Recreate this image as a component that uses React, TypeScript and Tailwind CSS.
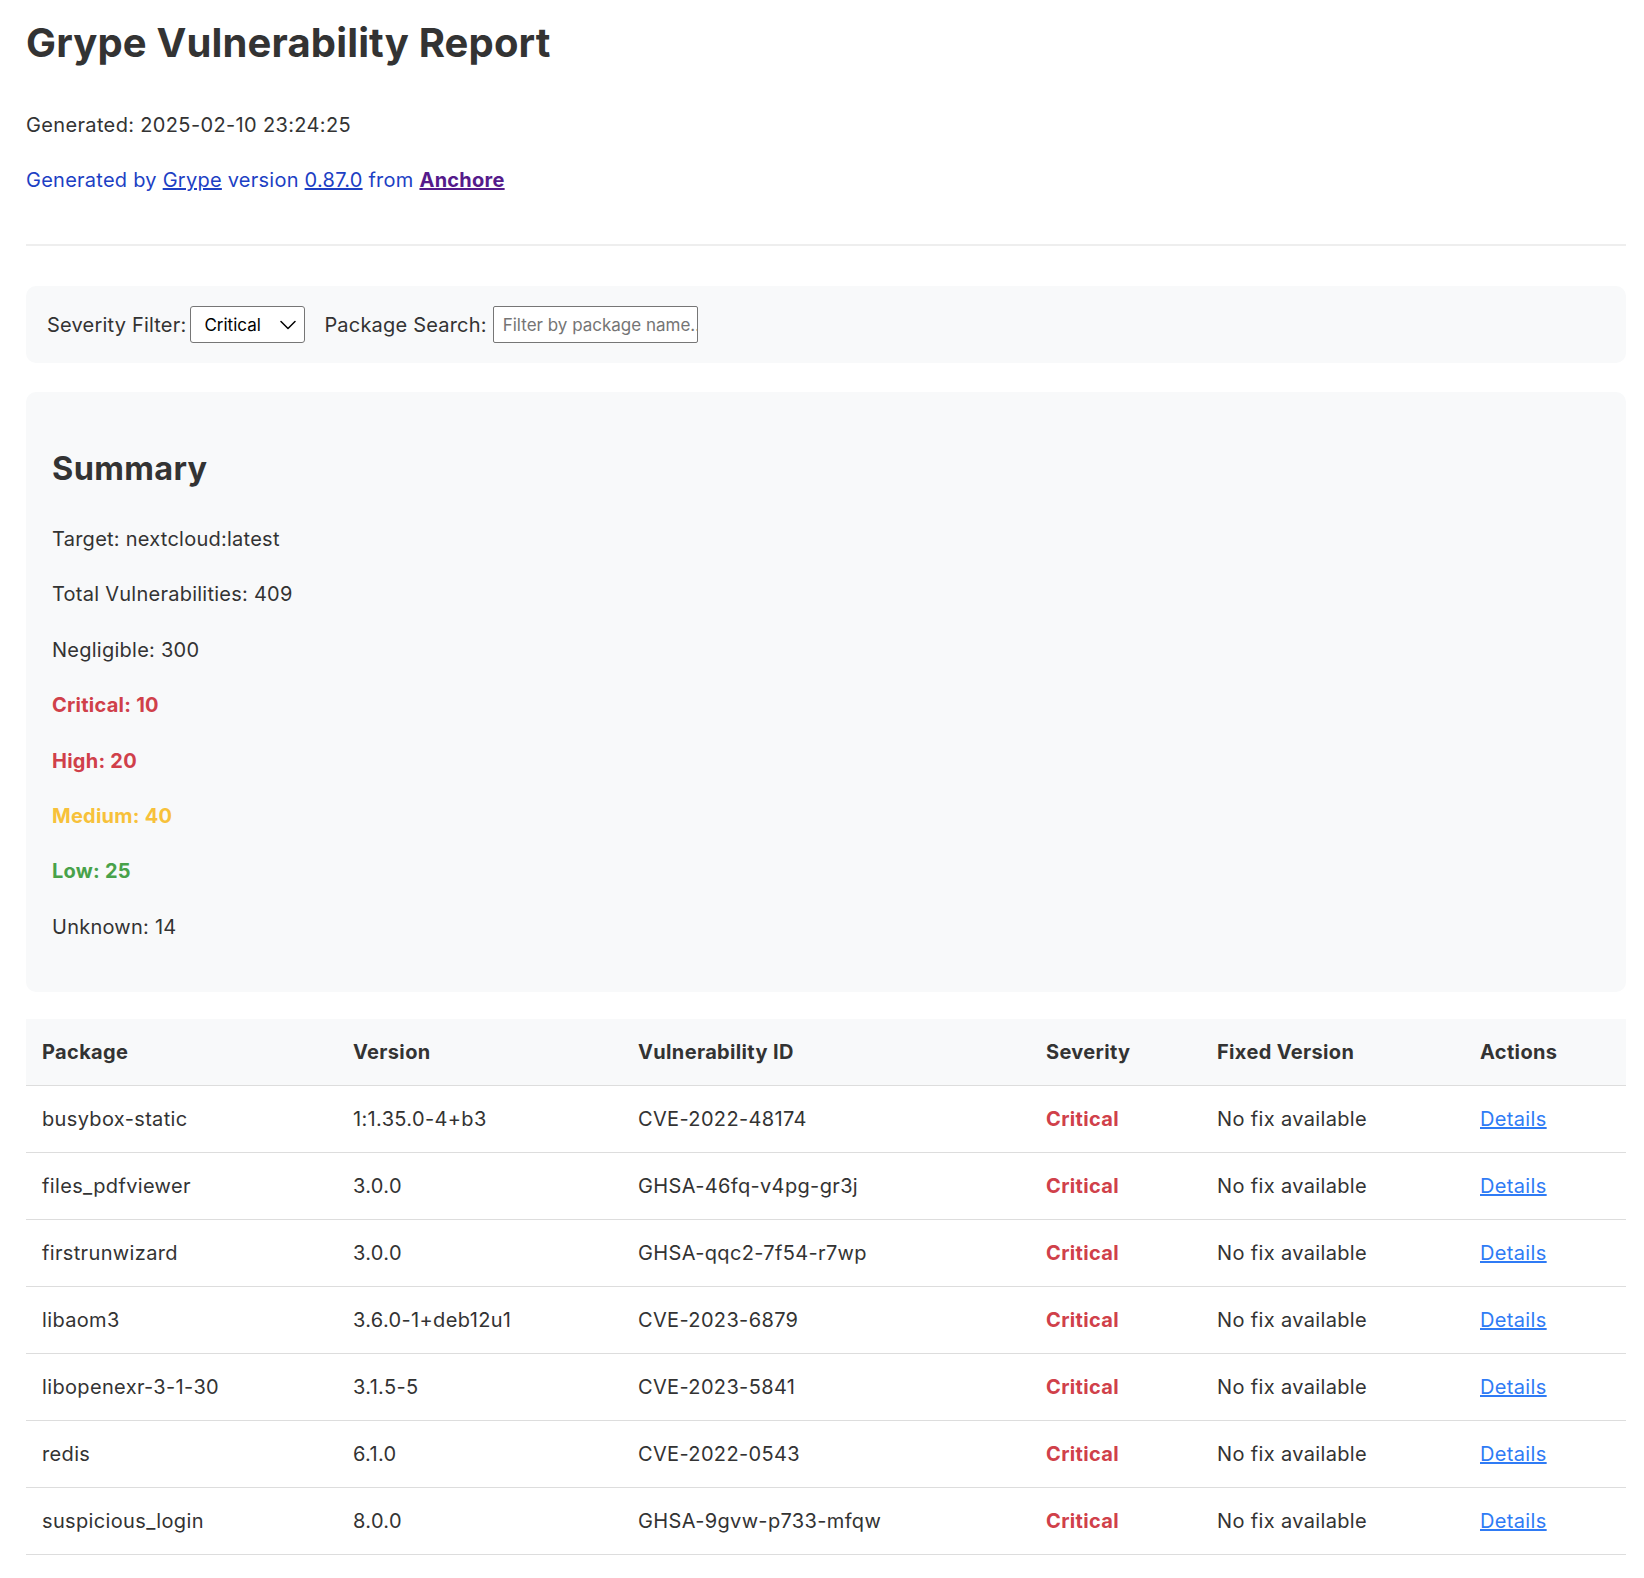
type Vuln = {
  pkg: string;
  version: string;
  id: string;
  severity: string;
  fixed: string;
};

const VULNS: Vuln[] = [
  { pkg: 'busybox-static', version: '1:1.35.0-4+b3', id: 'CVE-2022-48174', severity: 'Critical', fixed: 'No fix available' },
  { pkg: 'files_pdfviewer', version: '3.0.0', id: 'GHSA-46fq-v4pg-gr3j', severity: 'Critical', fixed: 'No fix available' },
  { pkg: 'firstrunwizard', version: '3.0.0', id: 'GHSA-qqc2-7f54-r7wp', severity: 'Critical', fixed: 'No fix available' },
  { pkg: 'libaom3', version: '3.6.0-1+deb12u1', id: 'CVE-2023-6879', severity: 'Critical', fixed: 'No fix available' },
  { pkg: 'libopenexr-3-1-30', version: '3.1.5-5', id: 'CVE-2023-5841', severity: 'Critical', fixed: 'No fix available' },
  { pkg: 'redis', version: '6.1.0', id: 'CVE-2022-0543', severity: 'Critical', fixed: 'No fix available' },
  { pkg: 'suspicious_login', version: '8.0.0', id: 'GHSA-9gvw-p733-mfqw', severity: 'Critical', fixed: 'No fix available' },
];

const SUMMARY = [
  { label: 'Target: nextcloud:latest', cls: 'text-[#333]' },
  { label: 'Total Vulnerabilities: 409', cls: 'text-[#333]' },
  { label: 'Negligible: 300', cls: 'text-[#333]' },
  { label: 'Critical: 10', cls: 'text-[#d0404a] font-bold' },
  { label: 'High: 20', cls: 'text-[#d0404a] font-bold' },
  { label: 'Medium: 40', cls: 'text-[#f7c13a] font-bold' },
  { label: 'Low: 25', cls: 'text-[#48a24a] font-bold' },
  { label: 'Unknown: 14', cls: 'text-[#333]' },
];

export default function App() {
  return (
    <div className="min-h-screen bg-white text-[#333] font-['Inter','Liberation_Sans',sans-serif] text-[20px] leading-[30px] tracking-[0.35px]">
      <div className="ml-[26px] w-[1600px] pb-[23px]">
        <h1 className="pt-[19px] text-[40px] leading-[48px] font-bold tracking-[0.15px]">Grype Vulnerability Report</h1>
        <p className="mt-[43px]">Generated: 2025-02-10 23:24:25</p>
        <p className="mt-[25px] text-[#1d3fc4] tracking-[0.25px]">
          Generated by{' '}
          <a href="#" className="underline">Grype</a> version{' '}
          <a href="#" className="underline">0.87.0</a> from{' '}
          <a href="#" className="underline font-bold text-[#551a8b]">Anchore</a>
        </p>
        <hr className="mt-[49px] border-0 border-t-2 border-[#eeeeee]" />

        <div className="mt-[40px] h-[77px] rounded-[10px] bg-[#f8f9fa] px-[21px] flex items-center tracking-[0.2px]">
          <label className="mr-[4px]">Severity Filter:</label>
          <div className="relative">
            <select
              defaultValue="Critical"
              className="appearance-none w-[115px] h-[37px] bg-white border border-[#767676] rounded-[3px] pl-[13px] text-[17px] tracking-normal text-black outline-none"
            >
              <option>All</option>
              <option>Critical</option>
              <option>High</option>
              <option>Medium</option>
              <option>Low</option>
            </select>
            <svg
              className="absolute right-[9px] top-[14px] pointer-events-none"
              width="16"
              height="10"
              viewBox="0 0 16 10"
              fill="none"
            >
              <polyline points="1,1.5 8,8.5 15,1.5" stroke="#000" strokeWidth="1.5" strokeLinecap="round" strokeLinejoin="round" />
            </svg>
          </div>
          <label className="ml-[19px] mr-[6px]">Package Search:</label>
          <input
            placeholder="Filter by package name..."
            className="w-[205px] h-[37px] bg-white border border-[#767676] rounded-[2px] pl-[9px] text-[17px] tracking-normal placeholder:text-[#757575] outline-none"
          />
        </div>

        <div className="mt-[29px] rounded-[10px] bg-[#f8f9fa] pl-[26px] pt-[59px] pb-[50px]">
          <h2 className="text-[32.5px] leading-[36px] font-bold">Summary</h2>
          <div className="mt-[37px] flex flex-col gap-[25.4px] tracking-[0.25px]">
            {SUMMARY.map(s => (
              <p key={s.label} className={s.cls}>{s.label}</p>
            ))}
          </div>
        </div>

        <table className="mt-[27px] w-full border-collapse text-left">
          <thead>
            <tr className="bg-[#f8f9fa] border-b border-[#dddddd]">
              <th className="w-[311px] h-[67px] pl-[16px] font-bold">Package</th>
              <th className="w-[285px] pl-[16px] font-bold">Version</th>
              <th className="w-[408px] pl-[16px] font-bold">Vulnerability ID</th>
              <th className="w-[171px] pl-[16px] font-bold">Severity</th>
              <th className="w-[263px] pl-[16px] font-bold">Fixed Version</th>
              <th className="pl-[16px] font-bold">Actions</th>
            </tr>
          </thead>
          <tbody>
            {VULNS.map(v => (
              <tr key={v.id} className="border-b border-[#dddddd]">
                <td className="h-[67px] pl-[16px]">{v.pkg}</td>
                <td className="pl-[16px]">{v.version}</td>
                <td className="pl-[16px]">{v.id}</td>
                <td className="pl-[16px] font-bold text-[#d0404a]">{v.severity}</td>
                <td className="pl-[16px]">{v.fixed}</td>
                <td className="pl-[16px]">
                  <a href="#" className="underline text-[#2f7bf5]">Details</a>
                </td>
              </tr>
            ))}
          </tbody>
        </table>
      </div>
    </div>
  );
}
